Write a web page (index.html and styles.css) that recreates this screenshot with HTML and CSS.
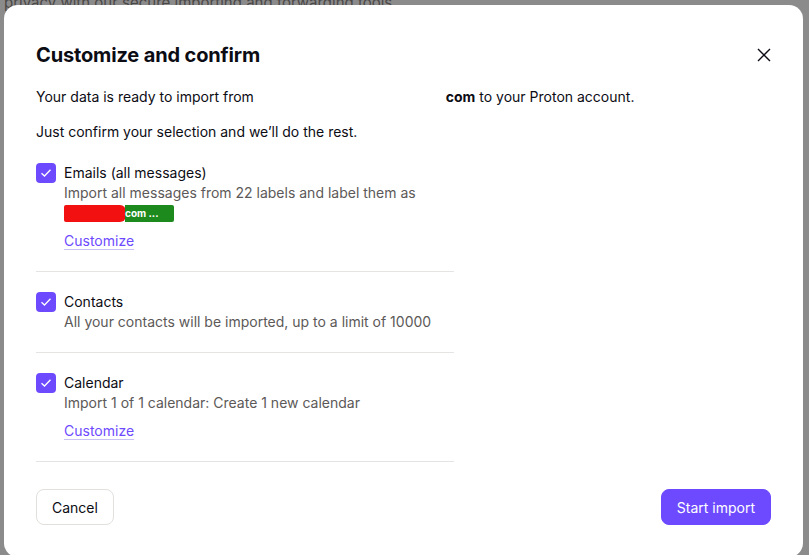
FILE: index.html
```html
<!DOCTYPE html>
<html lang="en">
<head>
<meta charset="utf-8">
<link rel="stylesheet" href="styles.css">
</head>
<body>
<div class="backdrop">
  <p class="bg-line">privacy with our secure importing and forwarding tools.</p>
</div>
<div class="modal" role="dialog">
  <header class="modal-header">
    <h1 class="title">Customize and confirm</h1>
    <button class="close" aria-label="Close">
      <svg width="14" height="14" viewBox="0 0 14 14"><path d="M1 1L13 13M13 1L1 13" stroke="#0c0c14" stroke-width="1.4" fill="none"/></svg>
    </button>
  </header>
  <p class="intro">Your data is ready to import from <span class="redacted"></span><b>com</b> to your Proton account.</p>
  <p class="intro intro2">Just confirm your selection and we’ll do the rest.</p>

  <ul class="items">
    <li class="item">
      <span class="check"><svg width="12" height="10" viewBox="0 0 12 10"><path d="M1.5 5.2L4.5 8L10.5 1.8" stroke="#fff" stroke-width="1.3" fill="none"/></svg></span>
      <div class="item-body">
        <div class="item-title">Emails (all messages)</div>
        <div class="item-desc">Import all messages from 22 labels and label them as <span class="pill"><span class="pill-red"></span><span class="pill-green">com ...</span></span></div>
        <a class="customize" href="#">Customize</a>
      </div>
    </li>
    <li class="item">
      <span class="check"><svg width="12" height="10" viewBox="0 0 12 10"><path d="M1.5 5.2L4.5 8L10.5 1.8" stroke="#fff" stroke-width="1.3" fill="none"/></svg></span>
      <div class="item-body">
        <div class="item-title">Contacts</div>
        <div class="item-desc">All your contacts will be imported, up to a limit of 10000</div>
      </div>
    </li>
    <li class="item">
      <span class="check"><svg width="12" height="10" viewBox="0 0 12 10"><path d="M1.5 5.2L4.5 8L10.5 1.8" stroke="#fff" stroke-width="1.3" fill="none"/></svg></span>
      <div class="item-body">
        <div class="item-title">Calendar</div>
        <div class="item-desc">Import 1 of 1 calendar: Create 1 new calendar</div>
        <a class="customize" href="#">Customize</a>
      </div>
    </li>
  </ul>

  <footer class="modal-footer">
    <button class="btn btn-outline">Cancel</button>
    <button class="btn btn-primary">Start import</button>
  </footer>
</div>
</body>
</html>
```

FILE: styles.css
```css
* { box-sizing: border-box; }
html, body { margin: 0; padding: 0; }
body {
  width: 809px;
  height: 555px;
  overflow: hidden;
  background: #8c8b8b;
  font-family: Inter, "Noto Sans", sans-serif;
  position: relative;
}
.backdrop {
  padding: 0 0 0 4px;
}
.bg-line {
  margin: -6px 0 0 0;
  font-size: 15px;
  line-height: 18px;
  color: #4a4847;
}
.modal {
  position: absolute;
  left: 4px;
  top: 5px;
  width: 799px;
  height: 552px;
  background: #fff;
  border-radius: 14px;
  padding: 0 32px 0 32px;
  color: #0c0c14;
}
.modal-header {
  display: flex;
  align-items: center;
  justify-content: space-between;
  height: 100px;
}
.title {
  margin: 0;
  font-size: 20px;
  font-weight: 700;
  letter-spacing: -0.15px;
}
.close {
  width: 28px;
  height: 28px;
  border: 0;
  background: transparent;
  padding: 0;
  display: flex;
  align-items: center;
  justify-content: center;
  margin-right: -7px;
}
.intro {
  margin: -18px 0 0 0;
  font-size: 14px;
  line-height: 20px;
}
.intro b { font-weight: 700; }
.intro2 { margin-top: 15px; }
.redacted {
  display: inline-block;
  width: 188px;
}
.items {
  list-style: none;
  margin: 21px 0 0 0;
  padding: 0;
  width: 418px;
}
.item {
  display: flex;
  gap: 8px;
  padding: 0 0 20px 0;
  border-bottom: 1px solid #e5e4e2;
}
.item + .item { padding-top: 20px; }
.check {
  flex: none;
  width: 20px;
  height: 20px;
  border-radius: 4px;
  background: #6d4aff;
  display: flex;
  align-items: center;
  justify-content: center;
}
.item-body {
  display: flex;
  flex-direction: column;
  font-size: 14px;
  line-height: 20px;
}
.item-title { color: #0c0c14; }
.item-desc { color: #5c5958; }
.pill {
  display: inline-flex;
  vertical-align: middle;
  height: 17px;
  font-size: 10px;
  line-height: 17px;
  font-weight: 700;
  color: #fff;
  border-radius: 2px;
  overflow: hidden;
  position: relative;
  top: -1px;
}
.pill-red {
  width: 62px;
  background: #f21010;
  border-radius: 0 6px 6px 0;
}
.pill-green {
  width: 49px;
  background: #1d8a1d;
  margin-left: -1px;
}
.customize {
  margin-top: 8px;
  color: #6d4aff;
  text-decoration: underline;
  text-decoration-color: #c9c2f5;
  text-underline-offset: 3px;
  align-self: flex-start;
}
.modal-footer {
  display: flex;
  justify-content: space-between;
  margin-top: 27px;
}
.btn {
  height: 36px;
  font-family: Inter, "Noto Sans", sans-serif;
  font-size: 14px;
  border-radius: 8px;
  padding: 0 15px;
  cursor: pointer;
}
.btn-outline {
  background: #fff;
  border: 1px solid #e2e0dd;
  color: #0c0c14;
}
.btn-primary {
  background: #6d4aff;
  border: 1px solid #6d4aff;
  color: #fff;
}
```
